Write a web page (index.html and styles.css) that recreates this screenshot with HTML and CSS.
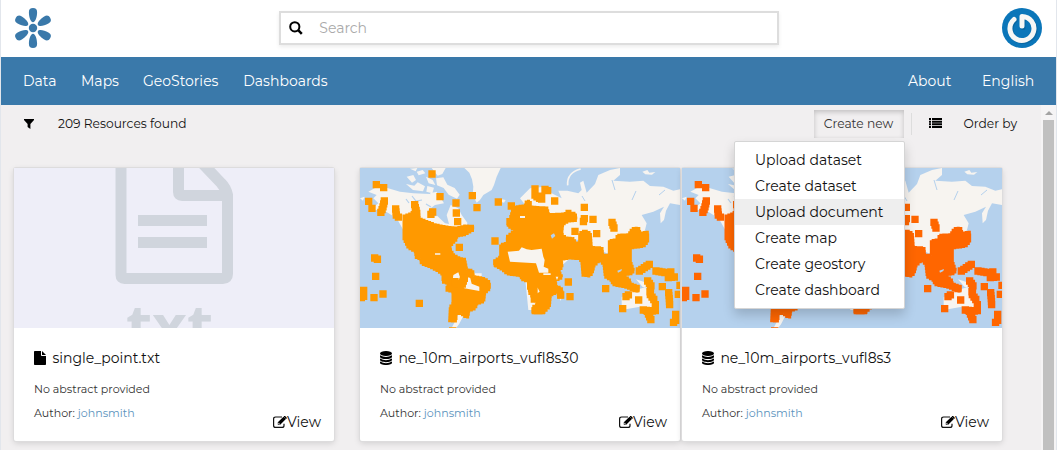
FILE: index.html
```html
<!DOCTYPE html>
<html lang="en">
<head>
<meta charset="utf-8">
<title>Resources</title>
<link rel="stylesheet" href="styles.css">
</head>
<body>
<svg class="defs" aria-hidden="true">
  <symbol id="airports" viewBox="0 0 320 160">
    <rect width="320" height="160" fill="#b5d1ed"/>
    <g fill="#f7f4f0">
      <g transform="translate(-10 -8) scale(.33333)">
        <path d="M343 24L358 38 366 58 370 80 368 105 380 128 390 120 400 105 425 90 432 75 440 50 452 24ZM55 95L75 84 112 84 150 95 190 100 240 102 270 110 282 130 255 135 235 150 240 170 262 168 285 190 297 192 290 165 302 135 325 145 335 165 352 188 350 205 300 215 160 210 140 175 100 150 60 150 85 130 70 115 80 105Z"/>
        <path d="M170 50l20-5 8 15-12 8zM168 72l25 5 10-10 22 12-6 15-30-4zM200 35l18-5 8 10-20 6zM228 50l20 10 8 15-20-5zM258 55l22-3 12 22 22 10 15 20-8 12-25-12-15-20-20-8zM180 26l22-2-5 10zM245 24h42l-10 18-14 5zM232 78l20 5-5 17-18-5zM240 100l20-5 8 18-22 5zM205 115l20 4 12 15-25-8zM30 115l14-5-5 12zM455 118l12 2-5 8-10-3z"/>
        <path d="M300 340h95v55h-95zM305 503l8-15 14-30 18 0-18 35-8 10z"/>
      </g>
      <g transform="translate(170 -8) scale(.33333)">
        <path d="M-30 115L0 85 45 80 65 100 95 115 85 92 112 92 145 100 155 90 150 68 160 62 170 98 195 72 205 45 240 30 270 24 270 45 250 62 300 65 340 62 360 78 400 80 430 92 450 88 450 135 420 130 408 152 402 180 392 190 390 160 402 140 370 155 335 165 350 190 345 210 320 240 230 280 150 240 60 230Z"/>
        <path d="M337 35l15-5 6 8 18-2-10 8-20-1zM-60 260h115v190h-60l-10-100-45-20zM275 450L275 412 300 395 325 388 345 382 378 420 365 455 330 440ZM318 358l25 8 12 18-18-4zM80 298l42-5-25 22zM82 400l18-5-8 28z"/>
        <path d="M152 27Q110 38 113 76" fill="none" stroke="#f7f4f0" stroke-width="5"/>
      </g>
    </g>
    <g fill="none" stroke="#b5d1ed">
      <path d="M222 28l3 5M252 12l3 10M276 23l-4 9M305 22l-6 5"/>
      <path d="M52 28l4 5 6-1M66 36l5 3M46 31l3 4" stroke-width="1.2"/>
    </g>
    <g fill="currentColor">
      <g transform="translate(-10 -8) scale(.33333)">
        <path data-block="9" d="M162 168L185 160 194 144 203 144 208 176 230 184 255 194 295 202 320 204 345 198 368 200 368 211 345 224 321 228 318 240 301 258 299 265 311 285 331 296 344 298 350 329 368 332 370 349 405 356 418 366 418 388 404 400 401 425 380 432 376 445 356 454 354 471 342 469 334 460 318 461 318 483 299 483 301 440 309 430 309 396 291 391 291 376 300 372 279 366 279 345 265 334 240 321 214 311 212 296 199 294 196 275 175 264 162 238Z"/>
      </g>
      <g transform="translate(170 -8) scale(.33333)">
        <path data-block="9" d="M-52 150L-46 141 -14 137 -11 124 1 124 1 141 51 144 56 164 105 162 109 154 121 154 121 160 136 160 138 181 116 183 98 194 95 222 108 234 131 236 136 249 149 249 149 219 164 212 181 219 184 262 216 264 218 286 238 286 238 242 261 239 261 226 296 224 306 206 326 204 330 219 353 217 353 246 341 259 301 264 301 304 310 329 308 340 281 346 298 358 301 371 324 379 324 394 304 389 290 382 249 374 244 361 226 351 222 315 209 301 192 318 186 341 179 348 159 346 156 310 149 296 120 294 94 298 96 321 86 335 94 344 94 354 76 362 78 379 94 384 98 411 86 411 84 396 61 406 58 441 41 458 9 458 9 440 24 432 -1 400 -4 366 -26 358 -26 348 -70 341 -81 331 -106 316 -106 302 -88 290 -88 254 -68 249 -68 229 -46 212 -66 198Z"/>
      </g>
    </g>
    <g fill="#f7f4f0">
      <path transform="translate(-10 -8) scale(.33333)" d="M310 345l15-8 5 15-4 8-18-1zM341 382l7-22 8-8 5 3 4 16 23 9v13l-45-8zM255 280h16v4h-16zM510 168h15v6h-15z"/>
      <path transform="translate(170 -8) scale(.33333)" d="M-67 275L-33 272 -25 262 -10 268 5 270 35 266 40 290 44 300 41 320 55 326 55 338 27 338 18 310 -60 305ZM8 388l15-5 6 12-12 8zM85 350l-8 0 4 10zM122 210h15l5 18-15 4zM40 345h22v-5H40z"/>
      <path transform="translate(170 -8) scale(.33333)" fill="#b5d1ed" d="M62 226l10-6 4 8-10 8zM262 332l14-5-2 6-10 5z"/>
    </g>
    <g fill="currentColor">
      <path data-block="22" transform="translate(-10 -8) scale(.33333)" d="M246 42h.1M79 74h.1M101 83h.1M56 124h.1M66 145h.1M103 123l-5 22-7 16M137 147l2 18 12 12M194 134l7 30M248 156l-10 14M270 110h.1M318 129h.1M319 159h.1M323 185h.1M367 107h.1M381 143h.1M445 126h.1M484 138h.1M328 262h.1M74 294l9 4M77 349h.1M41 391v22M34 413h.1M72 413h.1M99 402h.1M208 430h.1M435 243h.1M361 205h.1M315 365l10 8M308 513h.1M343 355l-8 22M480 185v4M500 155h.1M442 310h.1M542 378l10 15M553 417h.1M556 452h20"/>
      <path data-block="22" transform="translate(170 -8) scale(.33333)" d="M15 87v20l20 12 0-12M45 88l10 5M74 123h.1M163 142h.1M163 176l-5 16M189 178v4M135 214h.1M200 221h.1M246 187l7 20M115 366h.1M120 410h.1M227 386h.1M92 405h.1M328 333l30-20M378 333l30 5 18-3M415 353l18-2M353 363l10 14-4 24 14 20M397 380h.1M450 376h.1M416 398l2 20 1 18M445 403h.1M288 410l8-6M318 386h.1M326 420h.1M278 446h.1M340 450l32 4M352 454l12 28M376 434v20M437 463v18l-12 12"/>
    </g>
  </symbol>
  <symbol id="stack" viewBox="0 0 12 14">
    <ellipse cx="6" cy="2.5" rx="6" ry="2.4"/>
    <path d="M0 4.200Q6 7.700 12 4.200V5.700C12 8.800 0 8.800 0 5.700ZM0 7.500Q6 11 12 7.500V8.800C12 11.900 0 11.900 0 8.800ZM0 10.600Q6 14.100 12 10.600V11.700C12 14.800 0 14.800 0 11.700Z"/>
  </symbol>
  <symbol id="edit" viewBox="0 0 14 12">
    <path d="M9 1H2.600Q.6 1 .6 3v6.400q0 2 2 2H9q2 0 2-2V7.800" fill="none" stroke="currentColor" stroke-width="1.200"/>
    <path d="M4.800 6.300L10.500.7l2.400 2.400L7.200 8.800H4.800ZM11.100.1q.5-.4 1 0l1.500 1.500q.4.5 0 .9l-.5.4L10.700.5Z"/>
    <path d="M5.700 6.800v1.200h1.200" fill="none" stroke="#fff" stroke-width=".7"/>
  </symbol>
</svg>
<div class="page">
  <header class="header">
    <svg class="logo" viewBox="0 0 40 40">
      <g fill="#3a79aa">
        <circle cx="20" cy="20" r="4.200"/>
        <path id="petal" d="M20 14.200C17.500 14.200 16 9 15.900 4.500C15.700 1.300 17.300 0 20 0S24.300 1.300 24.100 4.500C24 9 22.500 14.200 20 14.200Z"/>
        <use href="#petal" transform="rotate(59 20 20)"/><use href="#petal" transform="rotate(121 20 20)"/>
        <use href="#petal" transform="rotate(180 20 20)"/><use href="#petal" transform="rotate(239 20 20)"/>
        <use href="#petal" transform="rotate(301 20 20)"/>
      </g>
    </svg>
    <div class="search">
      <svg width="14" height="14" viewBox="0 0 14 14" fill="none" stroke="#000" stroke-width="2"><circle cx="5.800" cy="5.800" r="4.600"/><path d="M9.200 9.200l3.600 3.600" stroke-width="2.500"/></svg>
      <span>Search</span>
    </div>
    <svg class="avatar" viewBox="0 0 40 40">
      <circle cx="20" cy="20" r="20" fill="#0b76b9"/>
      <g fill="none" stroke-linecap="round" stroke-width="5">
        <path d="M20.500 18.500V8.500A12 12 0 1 1 12.500 11.500" stroke="#07578c" opacity=".5" transform="translate(.6 .9)"/>
        <path d="M20 18V8.500A12 12 0 1 1 12 11.500" stroke="#f7f7f5" stroke-linejoin="round"/>
      </g>
    </svg>
  </header>
  <nav class="nav">
    <div class="links"><a class="n1">Data</a><a class="n2">Maps</a><a class="n3">GeoStories</a><a>Dashboards</a></div>
    <div class="links"><a class="n5">About</a><a class="n6">English</a></div>
  </nav>
  <main class="main">
    <div class="content">
      <div class="toolbar">
        <svg class="filter" width="10" height="10" viewBox="0 0 10 10"><path d="M0 0h10v1L6.400 5v5L3.600 8V5L0 1Z"/></svg>
        <span class="count">209 Resources found</span>
        <div class="create">
          <button class="create-btn">Create new</button>
          <ul class="menu">
            <li>Upload dataset</li><li>Create dataset</li><li class="active">Upload document</li>
            <li>Create map</li><li>Create geostory</li><li>Create dashboard</li>
          </ul>
        </div>
        <svg class="list" width="13" height="10" viewBox="0 0 13 10"><path d="M0 0h2v2H0zM3 0h10v2H3zM0 2.700h2v2H0zM3 2.700h10v2H3zM0 5.300h2v2H0zM3 5.300h10v2H3zM0 8h2v2H0zM3 8h10v2H3z"/></svg>
        <span class="order">Order by</span>
      </div>
      <div class="cards">
        <article class="card first">
          <svg class="thumb" viewBox="0 0 320 160">
            <rect width="320" height="160" fill="#eeeef8"/>
            <g fill="none" stroke="#d0d5dd" stroke-width="11">
              <path d="M107 -10V107q0 3.500 3.500 3.500H209q4.500 0 4.500-4.500V27Q212 20 207 15L188 -5M213.500 27.500H168q-3.500 0-3.500-3.500V-10"/>
              <path d="M124 52.500h69M124 74.500h69"/>
            </g>
            <text x="155.500" y="177.500" text-anchor="middle" class="ext" textLength="87" lengthAdjust="spacingAndGlyphs">txt</text>
          </svg>
          <div class="body">
            <h3><svg width="12" height="14" viewBox="0 0 12 14"><path d="M0 .8Q0 0 .8 0H7v4.200q0 .8.800.8H12v8.200q0 .8-.8.800H.8q-.8 0-.8-.8ZM8 0l4 4H8Z"/></svg><span>single_point.txt</span></h3>
            <p>No abstract provided</p><p>Author: <a>johnsmith</a></p>
            <div class="view"><svg width="14" height="12"><use href="#edit"/></svg><span>View</span></div>
          </div>
        </article>
        <article class="card">
          <svg class="thumb orange" viewBox="0 0 320 160"><use href="#airports"/></svg>
          <div class="body">
            <h3><svg width="12" height="14"><use href="#stack"/></svg><span>ne_10m_airports_vufl8s30</span></h3>
            <p>No abstract provided</p><p>Author: <a>johnsmith</a></p>
            <div class="view"><svg width="14" height="12"><use href="#edit"/></svg><span>View</span></div>
          </div>
        </article>
        <article class="card">
          <svg class="thumb red" viewBox="0 0 320 160"><use href="#airports"/></svg>
          <div class="body">
            <h3><svg width="12" height="14"><use href="#stack"/></svg><span>ne_10m_airports_vufl8s3</span></h3>
            <p>No abstract provided</p><p>Author: <a>johnsmith</a></p>
            <div class="view"><svg width="14" height="12"><use href="#edit"/></svg><span>View</span></div>
          </div>
        </article>
      </div>
    </div>
    <div class="scrollbar"><svg width="8" height="4" viewBox="0 0 8 4"><path d="M0 4L4 0l4 4Z" fill="#a3a3a3"/></svg><div class="thumbbar"></div></div>
  </main>
</div>
<script src="map.js"></script>
</body>
</html>
```
FILE: map.js
```js
// Airports are square markers: stamp squares along every marker path.
document.querySelectorAll('path[data-block]').forEach(function (path) {
  var size = Number(path.dataset.block);
  var out = '';
  path.getAttribute('d').split('M').filter(Boolean).forEach(function (part) {
    var line = document.createElementNS('http://www.w3.org/2000/svg', 'path');
    line.setAttribute('d', 'M' + part);
    var length = line.getTotalLength();
    for (var at = 0; at <= length; at += 9) {
      var p = line.getPointAtLength(at);
      out += 'M' + (p.x - size / 2) + ' ' + (p.y - size / 2) + 'v' + size + 'h' + size + 'v' + -size + 'z';
    }
  });
  var blocks = path.cloneNode();
  blocks.removeAttribute('data-block');
  blocks.setAttribute('d', out);
  path.parentNode.insertBefore(blocks, path);
  if (size >= 20) path.remove();
});
```
FILE: styles.css
```css
* { box-sizing: border-box; }
body { margin: 0; height: 450px; overflow: hidden; font-family: Montserrat, Inter, "Open Sans", sans-serif; font-size: 14px; font-weight: 400; color: #111; background: #fff; }
.defs { display: none; }
.page { height: 450px; border: solid #e2e6ec; border-width: 0 1px; display: flex; flex-direction: column; }
.header { height: 57px; flex: none; display: flex; align-items: center; justify-content: space-between; padding: 0 14px 1px 11.6px; }
.logo, .avatar { width: 40px; height: 40px; }
.search { width: 500px; height: 34px; border: 2px solid #ddd; box-shadow: 0 2px 4px rgba(0,0,0,.08); display: flex; align-items: center; gap: 16.5px; padding-left: 8px; color: #aaa; margin-right: -3px; }
.nav { height: 48px; flex: none; background: #3a79aa; color: #fff; display: flex; justify-content: space-between; padding: 0 22px; line-height: 48px; }
.nav a { white-space: nowrap; }
.links { display: flex; }
.n1 { width: 58px; } .n2 { width: 62px; } .n3 { width: 100.3px; }
.n5 { width: 74px; } .n6 { width: 52px; }
.main { flex: 1; min-height: 0; display: flex; justify-content: space-between; background: #f1eff0; }
.content { width: 1024px; }
.toolbar { height: 37px; display: flex; align-items: center; padding-left: 23px; font-size: 12.25px; }
.filter { margin: 1px 24px 0 0; }
.count { width: 756px; flex: none; padding-bottom: 1px; white-space: nowrap; }
.create { position: relative; height: 28px; padding-right: 7px; border-right: 1px solid; align-self: flex-end; border-image: linear-gradient(transparent 15%, #ddd 15%, #ddd 85%, transparent 85%) 1; flex: none; margin-bottom: 4px; }
.create-btn { display: block; width: 90px; height: 28px; padding: 0 1px 2px 0; border: 0; font: inherit; color: #333; background: #f1eff0; box-shadow: inset 0 2px 5px rgba(0,0,0,.2); }
.menu { position: absolute; z-index: 2; right: 6px; top: 31px; width: 171px; height: 168px; margin: 0; padding: 5px 0; list-style: none; background: #fff; border: 1px solid #d5d5d5; border-radius: 2px; box-shadow: 0 6px 12px rgba(0,0,0,.18); font-size: 14px; }
.menu li { height: 26px; line-height: 26px; padding-left: 20px; white-space: nowrap; }
.menu .active { background: #eee; }
.list { margin: 0 21.5px 0 17px; padding-bottom: 1px; height: 11px; }
.order { white-space: nowrap; padding-bottom: 1px; }
.cards { display: flex; padding: 26px 0 0 13px; gap: 2px; }
.card { width: 320px; height: 273px; flex: none; background: #fff; border-radius: 2px; box-shadow: 0 0 0 1px #dddcdd, 0 2px 6px rgba(0,0,0,.15); }
.first { margin-right: 24px; }
.thumb { display: block; width: 320px; height: 160px; }
.orange { color: #ff9900; } .red { color: #ff6600; }
.ext { font: 700 58px "Open Sans", sans-serif; fill: #d0d5dd; }
.body { padding: 20px 13px 0 20px; }
.body h3 { margin: 0 0 11px; height: 20px; font-size: 14px; font-weight: 400; display: flex; align-items: center; gap: 6.4px; }
.body h3 span { white-space: nowrap; }
.body p { margin: 0; height: 24px; line-height: 20px; font-size: 11.06px; color: #333; }
.body p a { color: #5b93bd; }
.view { margin-top: -15px; display: flex; justify-content: flex-end; align-items: center; height: 20px; }
.scrollbar { width: 15px; padding: 6px 2px 0; display: flex; flex-direction: column; align-items: center; gap: 5px; background: #f5f4f5; }
.thumbbar { width: 11px; flex: 1; background: #c0c0c0; }
```
